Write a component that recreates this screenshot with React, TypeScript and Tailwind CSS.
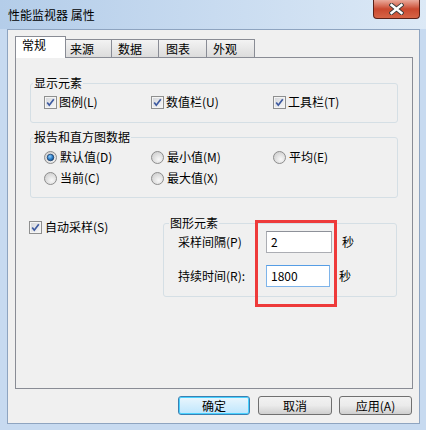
import React from "react";

function Check() {
  return (
    <svg width="13" height="13" viewBox="0 0 13 13" className="shrink-0">
      <defs>
        <linearGradient id="cbFill" x1="0" y1="0" x2="1" y2="1">
          <stop offset="0" stopColor="#d6d8dc" />
          <stop offset="1" stopColor="#f6f6f6" />
        </linearGradient>
      </defs>
      <rect x="0.5" y="0.5" width="12" height="12" fill="#f4f4f4" stroke="#8e8f8f" />
      <rect x="2" y="2" width="9" height="9" fill="url(#cbFill)" />
      <path d="M3.2 6.4 L5.3 9.2 L9.8 3.2" stroke="#3d5aa0" strokeWidth="1.7" fill="none" />
    </svg>
  );
}

function Radio({ on }: { on?: boolean }) {
  return (
    <svg width="13" height="13" viewBox="0 0 13 13" className="shrink-0">
      <defs>
        <radialGradient id="rdFill" cx="0.6" cy="0.65" r="0.6">
          <stop offset="0" stopColor="#f8f8f8" />
          <stop offset="1" stopColor="#d4d4d4" />
        </radialGradient>
        <radialGradient id="rdDot" cx="0.4" cy="0.35" r="0.7">
          <stop offset="0" stopColor="#8fd0ff" />
          <stop offset="0.6" stopColor="#2a7ac4" />
          <stop offset="1" stopColor="#154a80" />
        </radialGradient>
      </defs>
      <circle cx="6.5" cy="6.5" r="6" fill="url(#rdFill)" stroke="#8d8d8d" />
      {on && <circle cx="6.5" cy="6.5" r="3.3" fill="url(#rdDot)" stroke="#1e3f6a" strokeWidth="0.8" />}
    </svg>
  );
}

function CheckItem({ label, w }: { label: string; w?: string }) {
  return (
    <div className={`flex items-center gap-[2px] h-[14px] ${w ?? ""}`}>
      <Check />
      <span className="leading-[14px]">{label}</span>
    </div>
  );
}

function RadioItem({ label, on, w }: { label: string; on?: boolean; w?: string }) {
  return (
    <div className={`flex items-center gap-[3px] h-[14px] ${w ?? ""}`}>
      <Radio on={on} />
      <span className="leading-[14px]">{label}</span>
    </div>
  );
}

function Tab({ label, w, pl }: { label: string; w: string; pl: string }) {
  return (
    <div
      className={`h-[18px] ${w} ${pl} flex items-center border-t border-r border-[#898c95] bg-gradient-to-b from-[#f3f3f3] to-[#dcdcdc] leading-[14px]`}
    >
      {label}
    </div>
  );
}

function Btn({ label, w, def }: { label: string; w: string; def?: boolean }) {
  return (
    <div
      className={`${w} h-[19px] rounded-[3px] border flex items-center justify-center leading-[14px] ${
        def
          ? "border-[#3c7fb1] bg-gradient-to-b from-[#eaf6fd] to-[#bee6fd] shadow-[inset_0_0_0_1px_#48d1ff]"
          : "border-[#707070] bg-gradient-to-b from-[#f2f2f2] via-[#ebebeb] to-[#cfcfcf]"
      }`}
    >
      {label}
    </div>
  );
}

export default function App() {
  return (
    <div className="w-[426px] h-[430px] bg-[#c7daf0] flex flex-col font-['Noto_Sans_CJK_SC',sans-serif] text-[12px] text-black overflow-hidden">
      {/* Title bar */}
      <div className="h-[29px] shrink-0 relative bg-gradient-to-r from-[#b4cde9] via-[#c8dbf0] to-[#dce9f6]">
        <span className="absolute left-[8px] top-[7px] leading-[16px] text-[12px]">性能监视器 属性</span>
        <div className="absolute top-0 right-[6px] w-[47px] h-[19px] rounded-b-[4px] border border-t-0 border-[#5a2118] bg-gradient-to-b from-[#e9a99b] via-[#c9482f] to-[#d66446] flex items-center justify-center">
          <svg width="15" height="12" viewBox="0 0 15 12">
            <path d="M2.5 2 L12.5 10 M12.5 2 L2.5 10" stroke="#3b3b3b" strokeWidth="4.2" strokeLinecap="square" />
            <path d="M2.5 2 L12.5 10 M12.5 2 L2.5 10" stroke="#ffffff" strokeWidth="2.4" strokeLinecap="square" />
          </svg>
        </div>
      </div>

      {/* Client area */}
      <div className="ml-[7px] mr-[6px] h-[395px] shrink-0 border border-[#8ea4c0] bg-[#f0f0f0] flex flex-col pl-[7px] pr-[6px] pt-[6px]">
        {/* Tabs */}
        <div className="flex items-end h-[21px]">
          <div className="h-[22px] w-[51px] -mb-[1px] relative z-10 border border-b-0 border-[#898c95] bg-white pl-[6px] pt-[1px] leading-[14px]">
            常规
          </div>
          <Tab label="来源" w="w-[46px]" pl="pl-[4px]" />
          <Tab label="数据" w="w-[47px]" pl="pl-[6px]" />
          <Tab label="图表" w="w-[48px]" pl="pl-[7px]" />
          <Tab label="外观" w="w-[48px]" pl="pl-[6px]" />
        </div>

        {/* Panel */}
        <div className="h-[332px] border border-[#898c95] bg-[#f0f0f0] px-[14px] flex flex-col">
          {/* 显示元素 */}
          <div className="mt-[25px] h-[40px] relative border border-[#d5dfe5] rounded-[3px] pt-[11px] pl-[13px] flex">
            <span className="absolute -top-[8px] left-[2px] px-[1px] bg-[#f0f0f0] leading-[14px]">显示元素</span>
            <CheckItem label="图例(L)" w="w-[107px]" />
            <CheckItem label="数值栏(U)" w="w-[122px]" />
            <CheckItem label="工具栏(T)" />
          </div>

          {/* 报告和直方图数据 */}
          <div className="mt-[14px] h-[61px] relative border border-[#d5dfe5] rounded-[3px] pt-[12px] pl-[13px] flex flex-col gap-[7px]">
            <span className="absolute -top-[8px] left-[2px] px-[1px] bg-[#f0f0f0] leading-[14px]">报告和直方图数据</span>
            <div className="flex">
              <RadioItem label="默认值(D)" on w="w-[107px]" />
              <RadioItem label="最小值(M)" w="w-[122px]" />
              <RadioItem label="平均(E)" />
            </div>
            <div className="flex">
              <RadioItem label="当前(C)" w="w-[107px]" />
              <RadioItem label="最大值(X)" />
            </div>
          </div>

          {/* 自动采样 + 图形元素 */}
          <div className="mt-[25px] flex items-start">
            <div className="-mt-[3px] -ml-[1px] flex items-center gap-[3px] h-[14px]">
              <Check />
              <span className="leading-[14px]">自动采样(S)</span>
            </div>
            <div className="ml-auto mr-[1px] w-[234px] h-[74px] relative border border-[#d5dfe5] rounded-[3px] pt-[7px] pl-[14px] flex flex-col">
              <span className="absolute -top-[8px] left-[5px] px-[1px] bg-[#f0f0f0] leading-[14px]">图形元素</span>
              <div className="flex items-center h-[22px]">
                <span className="w-[88px] leading-[14px]">采样间隔(P)</span>
                <div className="w-[66px] h-[22px] bg-white border border-[#abadb3] border-t-[#8e9199] pl-[4px] flex items-center leading-[14px]">
                  2
                </div>
                <span className="ml-[10px] leading-[14px]">秒</span>
              </div>
              <div className="mt-[12px] flex items-center h-[22px]">
                <span className="w-[88px] leading-[14px]">持续时间(R):</span>
                <div className="w-[64px] h-[22px] bg-white border border-[#7eb4ea] border-t-[#569de5] pl-[4px] flex items-center leading-[14px]">
                  1800
                </div>
                <span className="ml-[9px] leading-[14px]">秒</span>
              </div>
              <div className="absolute left-[91px] -top-[4px] w-[82px] h-[87px] border-[3px] border-[#ee3a3a]" />
            </div>
          </div>
        </div>

        {/* Buttons */}
        <div className="mt-[7px] flex justify-end pr-[1px]">
          <Btn label="确定" w="w-[72px]" def />
          <div className="ml-[8px]">
            <Btn label="取消" w="w-[74px]" />
          </div>
          <div className="ml-[7px]">
            <Btn label="应用(A)" w="w-[73px]" />
          </div>
        </div>
      </div>
    </div>
  );
}
